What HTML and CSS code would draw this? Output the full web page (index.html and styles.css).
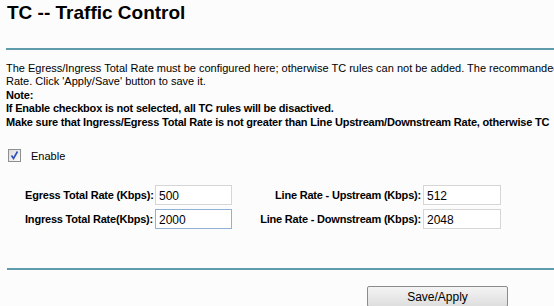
FILE: index.html
```html
<!DOCTYPE html>
<html lang="en">

<head>
  <meta charset="UTF-8" />
  <title>TC -- Traffic Control</title>
  <link rel="stylesheet" href="styles.css">
</head>

<body>
  <div class="page">
    <h1>TC -- Traffic Control</h1>
    <div class="rule"></div>

    <p class="intro">
      The Egress/Ingress Total Rate must be configured here; otherwise TC rules can not be added. The recommanded<br>
      Rate. Click 'Apply/Save' button to save it.<br>
      <b>Note:</b><br>
      <b>If Enable checkbox is not selected, all TC rules will be disactived.</b><br>
      <b>Make sure that Ingress/Egress Total Rate is not greater than Line Upstream/Downstream Rate, otherwise TC</b>
    </p>

    <label class="enable">
      <span class="check">
        <svg width="11" height="11" viewBox="0 0 11 11">
          <path d="M2.5 5.5 L4.5 8.5 L8.5 1.5" fill="none" stroke="#2b4fb8" stroke-width="1.6" />
        </svg>
      </span>
      <span>Enable</span>
    </label>

    <div class="rates">
      <label for="egress">Egress Total Rate (Kbps):</label>
      <input id="egress" type="text" value="500">
      <label for="up">Line Rate - Upstream (Kbps):</label>
      <input id="up" type="text" value="512">

      <label for="ingress">Ingress Total Rate(Kbps):</label>
      <input id="ingress" class="focused" type="text" value="2000">
      <label for="down">Line Rate - Downstream (Kbps):</label>
      <input id="down" type="text" value="2048">
    </div>

    <div class="rule bottom"></div>

    <div class="actions">
      <button type="button">Save/Apply</button>
    </div>
  </div>
</body>

</html>
```

FILE: styles.css
```css
html,
body {
  overflow: hidden;
}

body {
  margin: 0;
  background: #fcfcfc;
  color: #000;
  font-family: "Liberation Sans", Arial, sans-serif;
}

.page {
  width: 700px;
  padding: 0 0 0 6px;
}

h1 {
  font-size: 19px;
  font-weight: 700;
  margin: 0;
  padding: 2px 0 0 1px;
  line-height: 22px;
}

.rule {
  height: 2px;
  background: #5e9cab;
  margin-top: 24px;
}

.intro {
  margin: 12px 0 0 0;
  font-size: 11px;
  line-height: 13.4px;
  white-space: nowrap;
}

.intro b {
  letter-spacing: -0.2px;
}

.enable {
  display: flex;
  align-items: center;
  gap: 10px;
  margin: 20px 0 0 2px;
  font-size: 11px;
}

.check {
  display: flex;
  align-items: center;
  justify-content: center;
  box-sizing: border-box;
  width: 13px;
  height: 13px;
  border: 1px solid #8e8f8f;
  background: linear-gradient(135deg, #dcdcdc, #fbfbfb);
}

.rates {
  display: grid;
  grid-template-columns: 130px 77px 191px 78px;
  row-gap: 4px;
  margin: 23px 0 0 19px;
  align-items: center;
  font-size: 11px;
  font-weight: 700;
  letter-spacing: -0.2px;
}

.rates label {
  text-align: right;
  padding-right: 2px;
  white-space: nowrap;
}

.rates input {
  box-sizing: border-box;
  height: 20px;
  width: 100%;
  margin: 0;
  padding: 1px 3px 0;
  border: 1px solid #d6d6d6;
  background: #fff;
  font-family: "Liberation Sans", Arial, sans-serif;
  font-size: 12px;
  letter-spacing: 0;
  color: #000;
}

.rates input.focused {
  border-color: #8fb1d6;
}

.rule.bottom {
  margin-top: 39px;
  margin-left: 1px;
}

.actions {
  padding: 16px 0 0 361px;
}

.actions button {
  width: 141px;
  height: 21px;
  border: 1px solid #8c8c8c;
  border-radius: 2px;
  background: linear-gradient(#f4f4f4, #dedede);
  font-family: "Liberation Sans", Arial, sans-serif;
  font-size: 12px;
  color: #000;
  padding: 0;
}
```
